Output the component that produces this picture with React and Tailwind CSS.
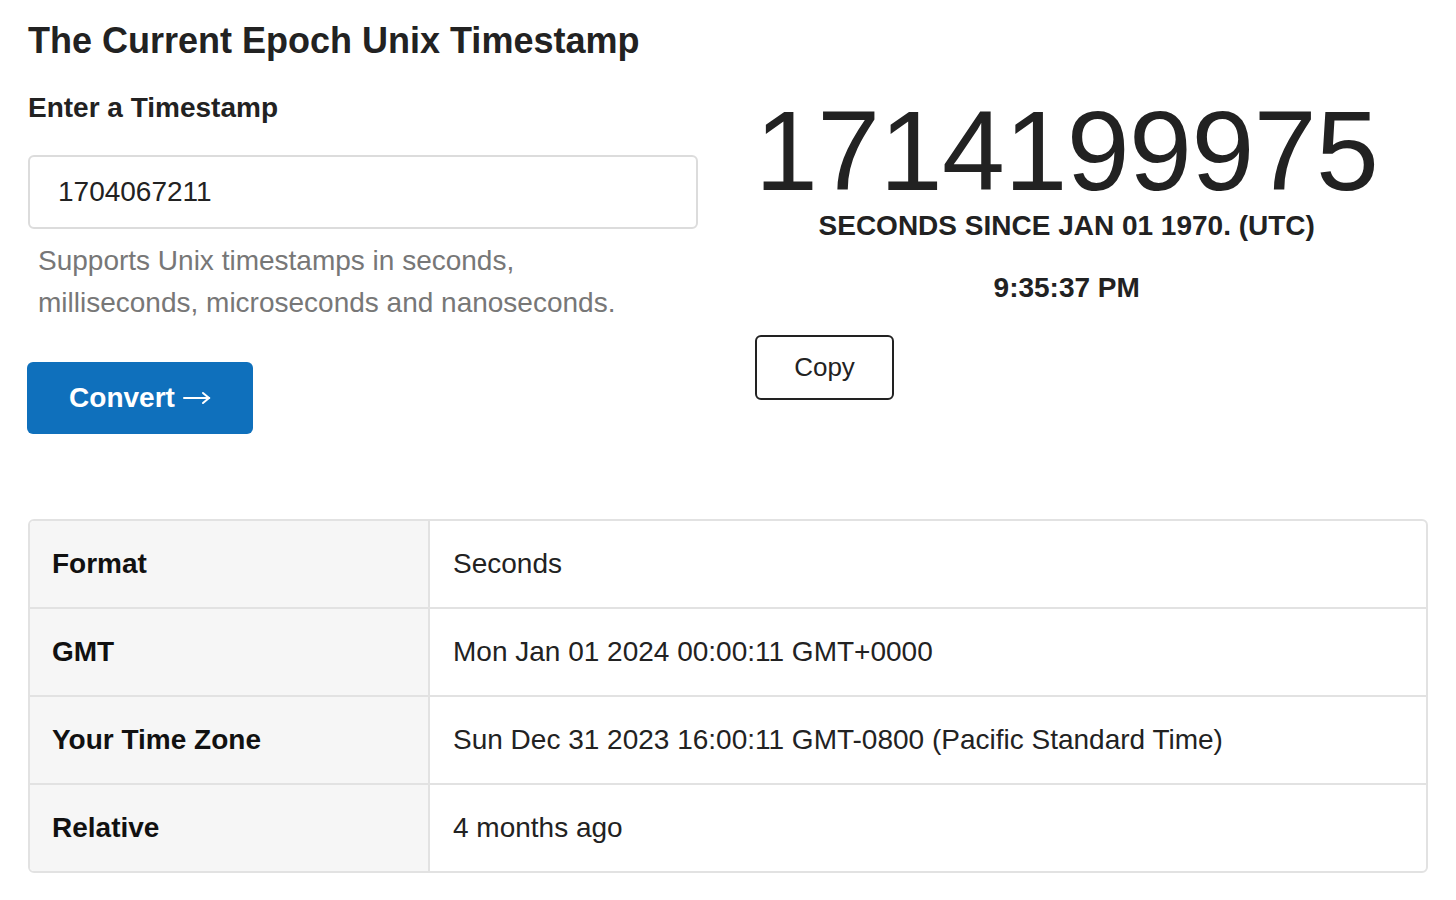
import React, { useState } from 'react';

const rows = [
  { label: 'Format', value: 'Seconds' },
  { label: 'GMT', value: 'Mon Jan 01 2024 00:00:11 GMT+0000' },
  { label: 'Your Time Zone', value: 'Sun Dec 31 2023 16:00:11 GMT-0800 (Pacific Standard Time)' },
  { label: 'Relative', value: '4 months ago' },
];

const ArrowRight = () => (
  <svg width="28" height="14" viewBox="0 0 28 14" className="inline-block ml-[8px] align-[1px]" fill="none" stroke="currentColor" strokeWidth="2" strokeLinecap="round">
    <path d="M1 7h25" />
    <path d="M20 2l6 5-6 5" />
  </svg>
);

const App = () => {
  const [timestamp, setTimestamp] = useState('1704067211');

  return (
    <div className="min-h-screen bg-white text-[#222] font-['Liberation_Sans',Arial,sans-serif] px-[28px] pt-[19px]">
      <div className="flex">
        {/* Left: input + convert */}
        <div className="w-[670px] shrink-0">
          <h1 className="text-[36px] leading-[44px] font-bold">The Current Epoch Unix Timestamp</h1>
          <h2 className="mt-[27px] text-[28px] leading-[36px] font-bold">Enter a Timestamp</h2>
          <input
            type="text"
            value={timestamp}
            onChange={(e) => setTimestamp(e.target.value)}
            className="mt-[29px] block w-full h-[74px] border-2 border-[#dcdcdc] rounded-[6px] px-[28px] text-[28px] text-[#222] focus:outline-none"
          />
          <p className="mt-[11px] pl-[10px] text-[28px] leading-[42px] text-[#777]">
            Supports Unix timestamps in seconds,<br />
            milliseconds, microseconds and nanoseconds.
          </p>
          <button
            type="button"
            className="mt-[38px] -ml-px w-[226px] h-[72px] rounded-[6px] bg-[#0f70bc] text-white text-[28px] font-bold flex items-center justify-center"
          >
            Convert<ArrowRight />
          </button>
        </div>

        {/* Right: current timestamp */}
        <div className="ml-[57px] pt-[76px]">
          <div className="w-fit text-center">
            <div className="text-[113px] leading-[113px] tracking-[-0.5px]">1714199975</div>
            <div className="text-[28px] leading-[36px] font-bold">SECONDS SINCE JAN 01 1970. (UTC)</div>
            <div className="mt-[26px] text-[28px] leading-[36px] font-bold">9:35:37 PM</div>
          </div>
          <button
            type="button"
            className="mt-[29px] w-[139px] h-[65px] border-2 border-[#222] rounded-[6px] bg-white text-[26px]"
          >
            Copy
          </button>
        </div>
      </div>

      {/* Result table */}
      <div className="mt-[85px] border-2 border-[#e2e2e2] rounded-[6px] overflow-hidden">
        {rows.map((row, i) => (
          <div key={row.label} className={`flex ${i > 0 ? 'h-[88px] border-t-2 border-[#e2e2e2]' : 'h-[86px]'}`}>
            <div className="w-[400px] shrink-0 bg-[#f6f6f6] border-r-2 border-[#e2e2e2] flex items-center px-[22px] text-[28px] font-bold text-[#111]">
              {row.label}
            </div>
            <div className="flex-1 flex items-center px-[23px] text-[28px] text-[#222]">
              {row.value}
            </div>
          </div>
        ))}
      </div>
    </div>
  );
};

export default App;
